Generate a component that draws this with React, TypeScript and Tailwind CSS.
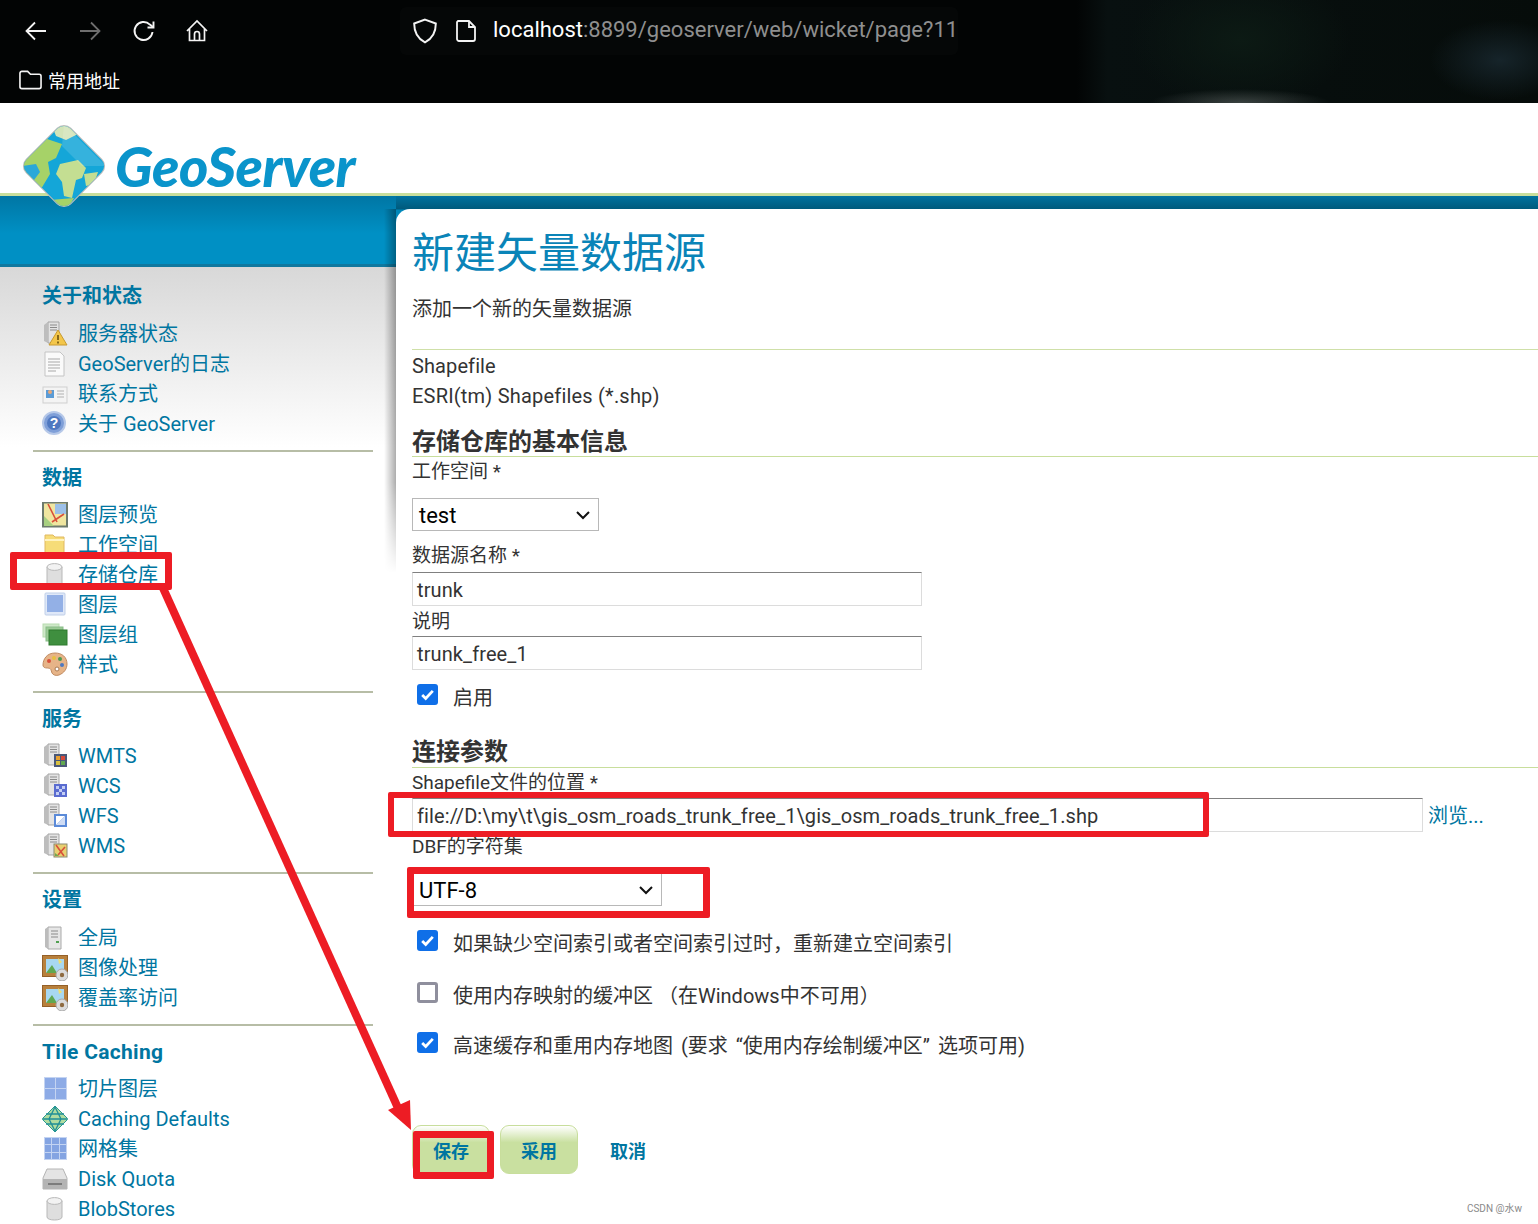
import { ReactNode } from 'react'

const FONT = "font-['Roboto','Noto_Sans_CJK_SC',sans-serif]"
const LABEL = 'text-[19px] leading-[30px] text-[#333]'

// sidebar icons, all drawn on a 26x26 box
const Server = ({ x = 0 }: { x?: number }) => (
  <g transform={`translate(${x} 0)`}>
    <path d="M6 1h11v21H6z" fill="#e3e3e3" stroke="#a5a5a5" />
    <path d="M2 4l4-3v21l-4-2z" fill="#bdbdbd" />
    <path d="M8 4h7M8 6.5h7M8 9h7" stroke="#8a8a8a" />
  </g>
)

const icons: Record<string, ReactNode> = {
  status: (
    <>
      <Server />
      <path d="M16 9l9 15H7z" fill="#f3c64a" stroke="#c89a30" />
      <path d="M16 14v5M16 20.5v2" stroke="#6b5210" strokeWidth="1.6" />
    </>
  ),
  log: (
    <>
      <path d="M3 1h15l4 4v20H3z" fill="#fafafa" stroke="#c4c4c4" />
      <path d="M6 8h12M6 11h12M6 14h12M6 17h12M6 20h8" stroke="#a8a8a8" />
    </>
  ),
  contact: (
    <>
      <rect x="1" y="6" width="24" height="16" fill="#f4f4f4" stroke="#cfcfcf" />
      <rect x="4" y="9" width="8" height="8" fill="#5b9bd5" />
      <circle cx="8" cy="11" r="2" fill="#e8a878" />
      <path d="M15 10h7M15 13h7M15 16h7" stroke="#b0b0b0" />
    </>
  ),
  about: (
    <>
      <circle cx="12" cy="12" r="11" fill="#7f9fd8" stroke="#b6c8e8" strokeWidth="2" />
      <circle cx="12" cy="12" r="7" fill="#4f78c0" />
      <text x="12" y="17" textAnchor="middle" fontSize="14" fontWeight="700" fill="#fff" fontFamily="Liberation Sans">?</text>
    </>
  ),
  preview: (
    <>
      <rect x="1" y="0.5" width="24" height="24" fill="#f0e6a0" stroke="#6d7a6d" strokeWidth="2" />
      <path d="M13 2h11v10H13z" fill="#9cc0e8" />
      <path d="M2 14l10 10H2z" fill="#a8d080" />
      <path d="M6 2l9 18M22 12l-12 8" stroke="#d8503a" strokeWidth="1.6" fill="none" />
    </>
  ),
  workspace: (
    <>
      <path d="M3 3h8l2 2h9v20H3z" fill="#f6dc78" stroke="#e0b860" />
      <path d="M3 8h19" stroke="#fff3c0" strokeWidth="2" />
    </>
  ),
  store: (
    <>
      <path d="M5 5v16c0 4 15 4 15 0V5z" fill="#dedede" stroke="#b8b8b8" />
      <ellipse cx="12.5" cy="5" rx="7.5" ry="3.4" fill="#f2f2f2" stroke="#b8b8b8" />
    </>
  ),
  layer: (
    <>
      <rect x="3" y="1" width="20" height="22" rx="1" fill="#dfe8f8" stroke="#c0cfe8" />
      <rect x="5" y="3" width="16" height="17" fill="#93b0e6" />
    </>
  ),
  group: (
    <>
      <rect x="1" y="2" width="16" height="13" fill="#cfe8c8" stroke="#b8dcb0" />
      <rect x="4" y="5" width="17" height="14" fill="#9ccb96" stroke="#88bb88" />
      <rect x="7" y="8" width="18" height="15" fill="#3f8f3f" stroke="#2e7a2e" />
    </>
  ),
  style: (
    <>
      <path d="M13 1C5 1 1 7 1 13c0 3 3 3 5 3 3 0 3 2 4 5 1 2 4 3 7 2 5-2 8-6 8-11C25 5 20 1 13 1z" fill="#e6b488" stroke="#c08a60" />
      <circle cx="7" cy="9" r="2" fill="#d8503a" />
      <circle cx="12" cy="6" r="2" fill="#e8c040" />
      <circle cx="18" cy="7" r="2" fill="#4f9a4f" />
      <circle cx="20" cy="13" r="2" fill="#4f78c0" />
      <circle cx="15" cy="17" r="2" fill="#fff" stroke="#a87850" />
    </>
  ),
  wmts: (
    <>
      <Server />
      <rect x="12" y="11" width="13" height="13" fill="#4a5878" />
      <path d="M14 13h4v4h-4z" fill="#e8a030" />
      <path d="M19 13h4v4h-4z" fill="#d84a3a" />
      <path d="M14 18h4v4h-4z" fill="#d8c040" />
      <path d="M19 18h4v4h-4z" fill="#60a850" />
    </>
  ),
  wcs: (
    <>
      <Server />
      <rect x="12" y="11" width="13" height="13" fill="#5a6cd0" />
      <path d="M14 13h3v3h-3zM20 13h3v3h-3zM17 16h3v3h-3zM14 19h3v3h-3zM20 19h3v3h-3z" fill="#c4cef4" />
    </>
  ),
  wfs: (
    <>
      <Server />
      <rect x="12" y="11" width="13" height="13" fill="#5b8ad8" />
      <path d="M14 22V13h9z" fill="#fff" />
      <path d="M14 22h9v-9z" fill="#cfdcf4" />
    </>
  ),
  wms: (
    <>
      <Server />
      <rect x="12" y="11" width="13" height="13" fill="#e8d070" stroke="#8a8a70" />
      <path d="M14 12l8 11M23 14l-7 8" stroke="#d8503a" strokeWidth="1.6" />
      <path d="M13 20l4 3h-4z" fill="#70a850" />
    </>
  ),
  global: (
    <>
      <path d="M6 2h13v22H6z" fill="#e6e6e6" stroke="#aaa" />
      <path d="M3 4l3-2v22l-3-2z" fill="#bcbcbc" />
      <path d="M9 6h7M9 9h7M9 12h7" stroke="#8a8a8a" />
      <path d="M14 17h3" stroke="#50a050" strokeWidth="2" />
    </>
  ),
  picture: (
    <>
      <rect x="0.5" y="0.5" width="25" height="21" fill="#b8803c" stroke="#946028" />
      <rect x="4" y="4" width="18" height="14" fill="#a8d8f0" />
      <path d="M4 18l6-8 5 8z" fill="#60a850" />
      <path d="M16 3l4 4-3 2z" fill="#f0e070" />
      <circle cx="20" cy="20" r="6" fill="#dcdcdc" stroke="#a8a8a8" />
      <circle cx="20" cy="20" r="2.2" fill="#8e6a40" />
    </>
  ),
  tiles: (
    <>
      <rect x="2" y="1" width="23" height="23" fill="#c4d4f2" />
      <path d="M3 2h10v10H3zM14 2h10v10H14zM3 13h10v10H3zM14 13h10v10H14z" fill="#8dabe6" />
    </>
  ),
  defaults: (
    <>
      <path d="M13 0l12 12c1 1 1 1 0 2L13 26 1 14c-1-1-1-1 0-2z" fill="#b0dca0" stroke="#2a9a90" />
      <path d="M13 1l6 12-6 12-6-12zM1 13h24M4 8h18M4 18h18" fill="none" stroke="#1f8f98" strokeWidth="1.3" />
    </>
  ),
  grid: (
    <>
      <rect x="2" y="1" width="23" height="23" fill="#c4d4f2" />
      <path d="M3 2h6v6H3zM10 2h7v6h-7zM18 2h6v6h-6zM3 9h6v7H3zM10 9h7v7h-7zM18 9h6v7h-6zM3 17h6v6H3zM10 17h7v6h-7zM18 17h6v6h-6z" fill="#84a4e2" />
    </>
  ),
  disk: (
    <>
      <path d="M5 3h16l4 9v11H1V12z" fill="#e4e4e4" stroke="#b4b4b4" />
      <rect x="1" y="13" width="24" height="10" fill="#b4b4b4" />
      <rect x="6" y="17" width="14" height="2" fill="#7c7c7c" />
    </>
  ),
}

type Item = { icon: string; label: string }
const sections: { title: string; items: Item[]; gap: string }[] = [
  {
    title: '关于和状态',
    gap: 'mt-[8px]',
    items: [
      { icon: 'status', label: '服务器状态' },
      { icon: 'log', label: 'GeoServer的日志' },
      { icon: 'contact', label: '联系方式' },
      { icon: 'about', label: '关于 GeoServer' },
    ],
  },
  {
    title: '数据',
    gap: 'mt-[7px]',
    items: [
      { icon: 'preview', label: '图层预览' },
      { icon: 'workspace', label: '工作空间' },
      { icon: 'store', label: '存储仓库' },
      { icon: 'layer', label: '图层' },
      { icon: 'group', label: '图层组' },
      { icon: 'style', label: '样式' },
    ],
  },
  {
    title: '服务',
    gap: 'mt-[7px]',
    items: [
      { icon: 'wmts', label: 'WMTS' },
      { icon: 'wcs', label: 'WCS' },
      { icon: 'wfs', label: 'WFS' },
      { icon: 'wms', label: 'WMS' },
    ],
  },
  {
    title: '设置',
    gap: 'mt-[8px]',
    items: [
      { icon: 'global', label: '全局' },
      { icon: 'picture', label: '图像处理' },
      { icon: 'picture', label: '覆盖率访问' },
    ],
  },
  {
    title: 'Tile Caching',
    gap: 'mt-[7px]',
    items: [
      { icon: 'tiles', label: '切片图层' },
      { icon: 'defaults', label: 'Caching Defaults' },
      { icon: 'grid', label: '网格集' },
      { icon: 'disk', label: 'Disk Quota' },
      { icon: 'store', label: 'BlobStores' },
    ],
  },
]

function Check({ on, label, className }: { on: boolean; label: string; className: string }) {
  return (
    <div className={`flex items-start pl-[5px] ${className}`}>
      {on ? (
        <span className="flex size-[21px] items-center justify-center rounded-[3px] bg-[#0f6fe8]">
          <svg viewBox="0 0 16 16" className="size-[17px]" fill="none" stroke="#fff" strokeWidth="2.6">
            <path d="M3 8.5l3.3 3.3L13 4.6" />
          </svg>
        </span>
      ) : (
        <span className="size-[21px] rounded-[3px] border-[3px] border-[#8f8f9d] bg-white" />
      )}
      <span className="ml-[15px] text-[20px] leading-[28px] text-[#333]">{label}</span>
    </div>
  )
}

function Select({ value, width }: { value: string; width: string }) {
  return (
    <div className={`flex h-[33px] items-center justify-between border border-[#b8b8b8] bg-white pl-[6px] pr-[7px] text-[22px] text-black ${width}`}>
      <span className="pt-[1px]">{value}</span>
      <svg viewBox="0 0 16 16" className="size-[16px]" fill="none" stroke="#111" strokeWidth="2">
        <path d="M2 5l6 6 6-6" />
      </svg>
    </div>
  )
}

function TextBox({ value, width }: { value: string; width: string }) {
  return (
    <div className={`flex h-[34px] items-center border border-[#dcdcdc] border-t-[#808080] bg-white pl-[4px] pt-[1px] text-[20px] tracking-[0.1px] text-[#333] ${width}`}>
      {value}
    </div>
  )
}

function Logo() {
  return (
    <svg viewBox="0 0 84 84" className="absolute left-[22px] top-[21px] h-[84px] w-[84px]">
      <defs>
        <clipPath id="globe">
          <rect x="11" y="11" width="62" height="62" rx="9" transform="rotate(45 42 42)" />
        </clipPath>
      </defs>
      <rect x="10" y="10" width="64" height="64" rx="10" transform="rotate(45 42 42)" fill="#bdbdbd" />
      <g clipPath="url(#globe)">
        <rect width="84" height="84" fill="#14a6d8" />
        <path d="M0 30L22 14l18 6-6 14-8 4 2 12-12 20L0 60z" fill="#a6d268" />
        <path d="M0 42l14-2 4 8-6 8-12 2z" fill="#2aa8d8" />
        <path d="M30 2h18l8 8-12 6-10-4z" fill="#d2e4b8" />
        <path d="M38 40l18-4 8 8-4 10-6 2-4 18-8-2-2-14-6-8z" fill="#c4de92" />
        <path d="M62 50l14-2-4 12-8 2z" fill="#c4de92" />
        <path d="M28 76l24-2-6 10H30z" fill="#a6d268" />
        <path d="M42 0L84 42H60L40 22z" fill="#fff" opacity="0.14" />
      </g>
    </svg>
  )
}

export default function App() {
  return (
    <div className={`relative h-[1224px] w-[1538px] overflow-hidden bg-white ${FONT}`}>
      {/* browser chrome */}
      <div className="h-[103px] bg-[radial-gradient(ellipse_90px_14px_at_1240px_103px,#3a4240_0%,transparent_100%),radial-gradient(ellipse_70px_40px_at_1500px_60px,#16242a_0%,transparent_100%),radial-gradient(ellipse_110px_70px_at_1240px_40px,#0c1a14_0%,transparent_100%),linear-gradient(90deg,#020404_0%,#020404_70%,#081010_72%,#060c0a_100%)] text-white">
        <div className="flex h-[62px] items-center pl-[24px]">
          <svg viewBox="0 0 24 24" className="size-[24px]" fill="none" stroke="#f4f4f4" strokeWidth="1.8">
            <path d="M22 12H2.5M11 3.5L2.5 12l8.5 8.5" />
          </svg>
          <svg viewBox="0 0 24 24" className="ml-[30px] size-[24px]" fill="none" stroke="#6e6e6e" strokeWidth="1.8">
            <path d="M2 12h19.5M13 3.5l8.5 8.5-8.5 8.5" />
          </svg>
          <svg viewBox="0 0 24 24" className="ml-[30px] size-[24px]" fill="none" stroke="#f4f4f4" strokeWidth="1.9">
            <path d="M20.5 13a9 9 0 1 1-2.6-7.4L21 8" />
            <path d="M21.5 2.5V8.5h-6" />
          </svg>
          <svg viewBox="0 0 24 24" className="ml-[29px] size-[24px]" fill="none" stroke="#f4f4f4" strokeWidth="1.7">
            <path d="M2 12L12 2l10 10M4.5 10v11.5h15V10M9.5 21.5V15a2.5 2.5 0 0 1 5 0v6.5" />
          </svg>
          <div className="ml-[191px] flex h-[48px] items-center rounded-[6px] bg-[#050707] pl-[12px]">
            <svg viewBox="0 0 24 24" className="size-[26px]" fill="none" stroke="#f4f4f4" strokeWidth="1.8">
              <path d="M12 1.5l10 3.6c0 8-2.4 13.6-10 17.4C4.4 18.7 2 13 2 5.1z" />
            </svg>
            <svg viewBox="0 0 24 24" className="ml-[16px] size-[24px]" fill="none" stroke="#f4f4f4" strokeWidth="1.8">
              <path d="M4 2h11l6 6v12a2 2 0 0 1-2 2H5a2 2 0 0 1-2-2V3z" />
              <path d="M15 2v6h6" />
            </svg>
            <span className="mb-[3px] ml-[15px] text-[22px]">
              localhost<span className="text-[#8f8f8f]">:8899/geoserver/web/wicket/page?11</span>
            </span>
          </div>
        </div>
        <div className="flex h-[41px] items-start pl-[19px] pt-[8px]">
          <svg viewBox="0 0 24 20" className="h-[20px] w-[23px]" fill="none" stroke="#f4f4f4" strokeWidth="1.7">
            <path d="M1 3a2 2 0 0 1 2-2h6l3 3h9a2 2 0 0 1 2 2v11a2 2 0 0 1-2 2H3a2 2 0 0 1-2-2z" />
          </svg>
          <span className="ml-[6px] text-[18px] leading-[24px]">常用地址</span>
        </div>
      </div>

      {/* page header, the logo hangs over the blue band below */}
      <div className="relative z-10 h-[93px] border-b-[3px] border-[#c8de9c]">
        <Logo />
        <div className="absolute left-[115px] top-[29px] font-['Lato',sans-serif] text-[56px] font-black italic leading-[68px] tracking-[-0.5px] text-[#0a94cb]">
          GeoServer
        </div>
      </div>

      <div className="flex">
        {/* left column */}
        <aside className="relative w-[396px] shrink-0">
          <div className="h-[71px] border-b-[3px] border-[#10789f] bg-[linear-gradient(180deg,#0076a4_0%,#0090c4_55%)]" />
          <div className="h-[180px] bg-[linear-gradient(180deg,#d8d8d8_0%,#ffffff_100%)]" />
          {/* shadow the panel throws on the sidebar, it fades out half way down */}
          <div className="absolute right-0 top-[13px] h-[364px] w-[12px] bg-[linear-gradient(90deg,rgba(0,0,0,0),rgba(0,0,0,0.32))] [mask-image:linear-gradient(180deg,#000_75%,transparent_100%)]" />
          <nav className="-mt-[180px] pl-[33px] pr-[23px] pt-[14px]">
            {sections.map((s, i) => (
              <section key={s.title} className={i < sections.length - 1 ? 'mb-[11px] border-b-2 border-[#b7bda6] pb-[11px]' : ''}>
                <h3 className={`pl-[9px] font-bold leading-[30px] text-[#0076a1] ${s.title === 'Tile Caching' ? 'text-[21px] tracking-[0.3px]' : 'text-[20px]'}`}>{s.title}</h3>
                <ul className={s.gap}>
                  {s.items.map((it) => (
                    <li key={it.label} className="flex h-[30px] items-center pl-[9px]">
                      <svg viewBox="0 0 26 26" className="size-[26px] shrink-0">
                        {icons[it.icon]}
                      </svg>
                      <span className="ml-[10px] whitespace-nowrap text-[20px] leading-[30px] text-[#0076a1]">{it.label}</span>
                    </li>
                  ))}
                </ul>
              </section>
            ))}
          </nav>
        </aside>

        {/* main panel */}
        <div className="flex-1 bg-[linear-gradient(180deg,#00729f_0px,#005a7c_13px,#0088ba_14px,#0090c4_71px)] pt-[13px]">
          <main className="h-[1015px] rounded-tl-[14px] bg-white pl-[16px]">
            <h1 className="pt-[15px] text-[42px] font-normal leading-[60px] text-[#0a84b8]">新建矢量数据源</h1>
            <p className="mt-[11px] text-[20px] leading-[28px] text-[#333]">添加一个新的矢量数据源</p>
            <div className="mt-[26px] border-t border-[#cfe0a8] pt-[1px]">
              <p className="text-[20px] leading-[30px] tracking-[0.1px] text-[#333]">Shapefile</p>
              <p className="text-[20px] leading-[30px] tracking-[0.2px] text-[#333]">ESRI(tm) Shapefiles (*.shp)</p>
            </div>

            <h2 className="mt-[14px] border-b border-[#c8de9c] pt-[3px] text-[24px] font-bold leading-[28px] text-[#333]">存储仓库的基本信息</h2>
            <p className={LABEL}>工作空间 *</p>
            <div className="mt-[11px]">
              <Select value="test" width="w-[187px]" />
            </div>
            <p className={`mt-[10px] ${LABEL}`}>数据源名称 *</p>
            <div className="mt-[1px]">
              <TextBox value="trunk" width="w-[510px]" />
            </div>
            <p className={`pt-[1px] ${LABEL}`}>说明</p>
            <div className="-mt-[1px]">
              <TextBox value="trunk_free_1" width="w-[510px]" />
            </div>
            <Check on label="启用" className="mt-[14px]" />

            <h2 className="mt-[23px] border-b border-[#c8de9c] pt-[2px] text-[24px] font-bold leading-[30px] text-[#333]">连接参数</h2>
            <p className="text-[19px] leading-[29px] text-[#333]">Shapefile文件的位置 *</p>
            <div className="mt-[1px] flex items-center">
              <TextBox value="file://D:\my\t\gis_osm_roads_trunk_free_1\gis_osm_roads_trunk_free_1.shp" width="w-[1011px]" />
              <span className="ml-[5px] pt-[2px] text-[20px] text-[#0076a1]">浏览...</span>
            </div>
            <p className={LABEL}>DBF的字符集</p>
            <div className="mt-[11px]">
              <Select value="UTF-8" width="w-[250px]" />
            </div>
            <Check on label="如果缺少空间索引或者空间索引过时，重新建立空间索引" className="mt-[24px]" />
            <Check on={false} label="使用内存映射的缓冲区 （在Windows中不可用）" className="mt-[24px]" />
            <Check on label="高速缓存和重用内存地图 (要求 “使用内存绘制缓冲区” 选项可用)" className="mt-[22px] [word-spacing:3px]" />

            <div className="mt-[65px] flex items-center">
              <button className="h-[49px] w-[78px] rounded-[9px] border border-[#c8de9c] bg-[linear-gradient(180deg,#ffffff_0%,#c9e0a0_35%)] pt-[3px] text-[18px] font-bold text-[#0076a1]">保存</button>
              <button className="ml-[10px] h-[49px] w-[78px] rounded-[9px] border border-[#c8de9c] bg-[linear-gradient(180deg,#ffffff_0%,#c9e0a0_35%)] pt-[3px] text-[18px] font-bold text-[#0076a1]">采用</button>
              <span className="ml-[32px] pt-[3px] text-[18px] font-bold text-[#0076a1]">取消</span>
            </div>
          </main>
        </div>
      </div>

      {/* red annotations drawn over the page */}
      <div className="absolute left-[10px] top-[552px] h-[38px] w-[162px] rounded-[2px] border-[7px] border-[#ed1c24]" />
      <div className="absolute left-[388px] top-[792px] h-[45px] w-[821px] rounded-[2px] border-[6px] border-[#ed1c24]" />
      <div className="absolute left-[407px] top-[867px] h-[51px] w-[303px] rounded-[2px] border-[7px] border-[#ed1c24]" />
      <div className="absolute left-[413px] top-[1131px] h-[48px] w-[81px] rounded-[2px] border-[7px] border-[#ed1c24]" />
      <svg viewBox="0 0 1538 1224" className="pointer-events-none absolute left-0 top-0 h-[1224px] w-[1538px]">
        <path d="M163 588L398 1108" stroke="#ed1c24" strokeWidth="8" fill="none" />
        <path d="M411 1130L388 1110 410 1100z" fill="#ed1c24" />
      </svg>

      <div className="absolute bottom-[9px] right-[16px] text-[10px] leading-[12px] text-[#8a8a8a]">CSDN @水w</div>
    </div>
  )
}
